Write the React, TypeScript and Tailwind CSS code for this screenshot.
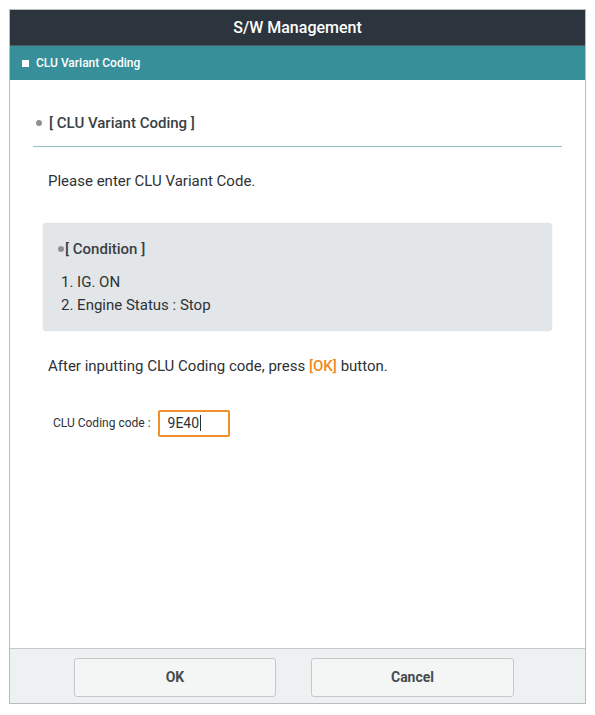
export default function App() {
  return (
    <div className="h-[715px] w-[595px] bg-white pl-[9px] pt-[9px]" style={{ fontFamily: "Roboto, 'Liberation Sans', sans-serif" }}>
      <div className="flex h-[695px] w-[577px] flex-col border border-[#b9bcbf] bg-white">
        <div className="flex h-[35px] items-center justify-center bg-[#2c353e] text-[16px] font-medium text-white">S/W Management</div>
        <div className="flex h-[35px] items-center gap-[7px] border-t border-[#4a5a63] bg-[#378f99] pl-[12px] text-[12px] font-medium text-white">
          <span className="inline-block h-[7px] w-[7px] bg-white" />
          CLU Variant Coding
        </div>

        <div className="flex flex-1 flex-col px-[23px]">
          <div className="mt-[32px] flex items-center gap-[7px] pl-[3px] text-[15px] font-medium text-[#3a3f44]">
            <span className="inline-block h-[6px] w-[6px] rounded-full bg-[#8c9196]" />
            [ CLU Variant Coding ]
          </div>
          <div className="mt-[11px] h-px bg-[#8fc3c8]" />
          <p className="mt-[23px] pl-[15px] text-[15px] text-[#2d3236]">Please enter CLU Variant Code.</p>

          <div className="mx-[10px] mt-[31px] h-[108px] rounded-[4px] bg-[#e3e6e8] px-[15px] pt-[15px] shadow-[0_0_1px_#b8bcbf]">
            <div className="flex items-center text-[15px] font-medium text-[#3a3f44]">
              <span className="mr-[1px] inline-block h-[6px] w-[6px] rounded-full bg-[#8c9196]" />
              [ Condition ]
            </div>
            <div className="mt-[10px] pl-[3px] text-[15px] leading-[23px] text-[#2d3236]">
              <div>1. IG. ON</div>
              <div>2. Engine Status : Stop</div>
            </div>
          </div>

          <p className="mt-[24px] pl-[15px] text-[15px] text-[#2d3236]">
            After inputting CLU Coding code, press <span className="font-medium text-[#f08a1c]">[OK]</span> button.
          </p>

          <div className="mt-[32px] flex items-center pl-[20px]">
            <span className="text-[12px] text-[#2d3236]">CLU Coding code :</span>
            <div className="ml-[7px] flex h-[27px] w-[72px] items-center rounded-[2px] border-2 border-[#f0902a] pl-[8px] text-[14px] text-[#2d3236]">
              9E40<span className="ml-px inline-block h-[16px] w-px bg-[#2d3236]" />
            </div>
          </div>
        </div>

        <div className="flex h-[55px] items-start gap-[35px] border-t border-[#c4c8cb] bg-[#eef1f1] pl-[64px] pt-[9px]">
          <button className="h-[39px] w-[202px] rounded-[3px] border border-[#c4c8cb] bg-[#f4f6f6] text-[14px] font-bold text-[#454b51]">OK</button>
          <button className="h-[39px] w-[203px] rounded-[3px] border border-[#c4c8cb] bg-[#f4f6f6] text-[14px] font-bold text-[#454b51]">Cancel</button>
        </div>
      </div>
    </div>
  );
}
